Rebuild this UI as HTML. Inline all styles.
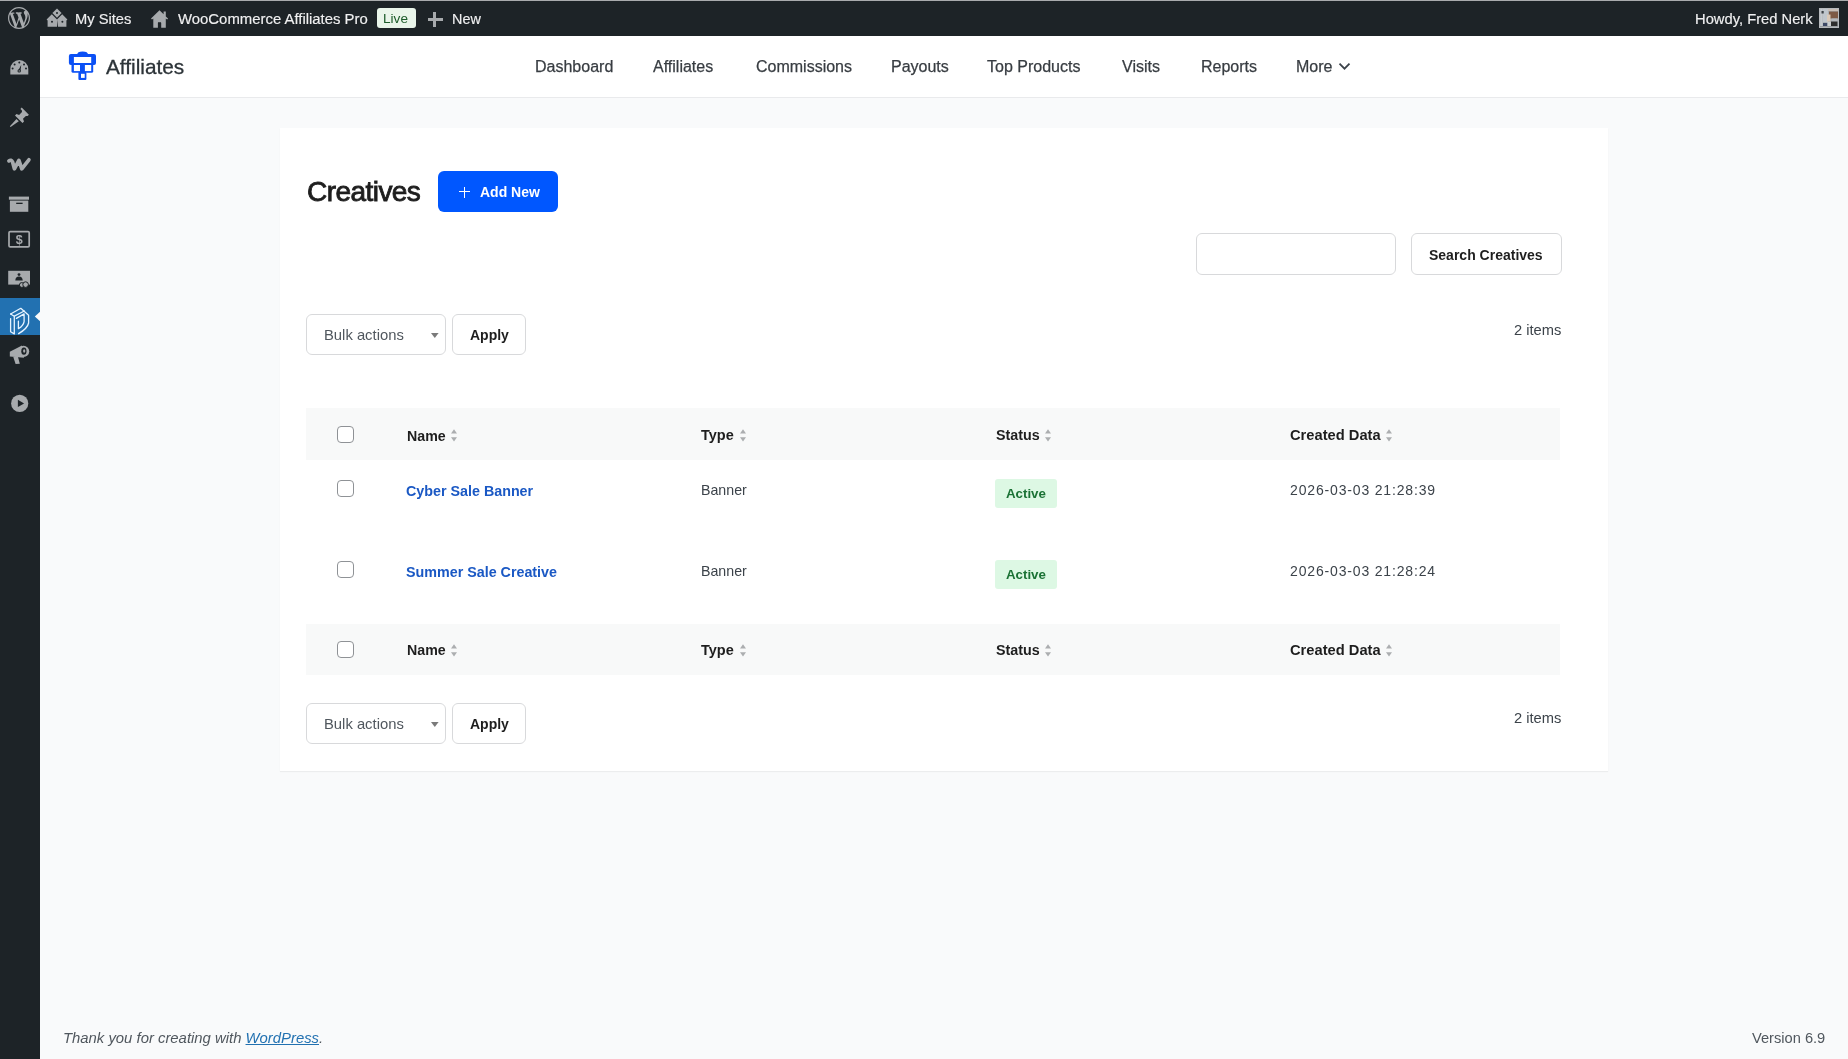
<!DOCTYPE html>
<html><head><meta charset="utf-8">
<style>
*{box-sizing:border-box;margin:0;padding:0}
html,body{width:1848px;height:1059px;overflow:hidden;background:#f9fafb;font-family:"Liberation Sans",sans-serif;position:relative}
.a{position:absolute;white-space:pre;line-height:1;will-change:transform}
.w{color:#f0f0f1;-webkit-text-stroke:0.15px #f0f0f1}
.nav{color:#383d42;-webkit-text-stroke:0.25px #383d42}
.btn{position:absolute;border:1px solid #d8d9db;border-radius:6px;background:#fff}
.thb{position:absolute;left:306px;width:1254px;background:#f8f9f9}
.cb{position:absolute;left:336.8px;width:17.4px;height:17.4px;border:1.1px solid #8f9296;border-radius:4px;background:#fff}
.th{font-weight:bold;color:#1e1e1e}
.link{font-weight:bold;color:#1a58c4}
.cell{color:#3c434a}
.date{color:#3c434a;letter-spacing:.84px}
.badge{position:absolute;left:995px;width:62px;height:29px;background:#ddf8e4;border-radius:3px}
.bt{font-weight:bold;color:#1b7235}
</style></head><body>
<div class="a" style="left:0;top:0;width:1848px;height:36px;background:#1d2327"></div>
<div class="a" style="left:0;top:0;width:1848px;height:1px;background:#a9abad"></div>
<svg class="a" style="left:8px;top:7px" width="22" height="22" viewBox="0 0 20 20"><path fill="#a7aaad" d="M20 10c0-5.51-4.49-10-10-10C4.48 0 0 4.49 0 10c0 5.52 4.48 10 10 10 5.51 0 10-4.48 10-10zM7.78 15.37L4.37 6.22c.55-.02 1.170-.08 1.17-.08.5-.06.44-1.13-.06-1.11 0 0-1.45.11-2.37.11-.18 0-.37 0-.58-.01C4.12 2.83 6.9 1.2 10 1.2c2.31 0 4.41.87 5.99 2.32-.67-.11-1.63.39-1.63 1.56 0 .73.44 1.34.89 2.07.35.61.55 1.36.55 2.46 0 1.49-1.4 5-1.4 5l-3.03-8.37c.54-.02.82-.17.82-.17.5-.05.44-1.25-.06-1.22 0 0-1.44.12-2.38.12-.87 0-2.33-.12-2.33-.12-.5-.03-.56 1.2-.06 1.22l.92.08 1.26 3.41zM17.41 10c.24-.64.74-1.87.43-4.25.7 1.29 1.05 2.71 1.05 4.25 0 3.29-1.73 6.24-4.4 7.78.97-2.59 1.94-5.2 2.92-7.78zM6.1 18.09C3.12 16.64 1.11 13.53 1.11 10c0-1.3.23-2.48.72-3.59 1.42 3.89 2.84 7.79 4.27 11.68zm4.04-6.72l2.57 6.96c-.85.29-1.74.44-2.71.44-.82 0-1.62-.11-2.37-.33.84-2.37 1.68-4.72 2.51-7.07z"/></svg>
<svg class="a" style="left:46px;top:8.4px" width="22" height="19" viewBox="0 0 22 19"><g fill="#a7aaad"><path d="M11 0.5l4.6 4.6-4.6 4.6-4.6-4.6z"/><path d="M0.6 11.4l5.2-5.2 5.2 5.2v7.4H1.6v-6.4z"/><path d="M11 11.4l5.2-5.2 5.2 5.2-1 1v6.4H12z"/></g><g fill="#1d2327"><circle cx="11" cy="5.1" r="1"/><circle cx="6" cy="13.8" r="1"/><circle cx="16.4" cy="13.8" r="1"/></g></svg>
<div class="a w" style="left:75.3px;top:12.2px;font-size:14.7px;">My Sites</div>
<svg class="a" style="left:151px;top:10px" width="17" height="18" viewBox="0 0 17 18"><path fill="#a7aaad" d="M8.5 0.3L0 8.6l1 1 1.3-1.2V17.7h4.6v-5h3.3v5h4.6V8.4l1.3 1.2 1-1-2.3-2.2V1.6h-2.2v2.6z"/><path fill="#1d2327" d="M7 12.3h3v5.4H7z"/></svg>
<div class="a w" style="left:177.9px;top:12.0px;font-size:14.9px;">WooCommerce Affiliates Pro</div>
<div class="a" style="left:377px;top:8px;width:39px;height:20px;background:#e9f5ea;border-radius:3px"></div>
<div class="a " style="left:383.4px;top:12.4px;font-size:13.6px;color:#1d5c2b">Live</div>
<div class="a" style="left:427.5px;top:17.5px;width:14.5px;height:3px;background:#a7aaad"></div><div class="a" style="left:433.3px;top:11.7px;width:3px;height:14.5px;background:#a7aaad"></div>
<div class="a w" style="left:452.0px;top:11.9px;font-size:14.4px;">New</div>
<div class="a w" style="left:1695.0px;top:12.1px;font-size:14.74px;">Howdy, Fred Nerk</div>
<svg class="a" style="left:1819px;top:8px" width="20" height="20" viewBox="0 0 20 20">
<defs><filter id="bl" x="-10%" y="-10%" width="120%" height="120%"><feGaussianBlur stdDeviation="0.55"/></filter></defs>
<rect x="0" y="0" width="20" height="20" fill="#b9bdc1"/>
<g filter="url(#bl)">
<rect x="1" y="1" width="18" height="18" fill="#a9afb4"/>
<rect x="1.2" y="1" width="2.4" height="18" fill="#c5cace"/>
<rect x="4" y="1" width="5" height="13" fill="#bfc6cc"/>
<rect x="2.5" y="3" width="2.2" height="2.5" fill="#3a3f44"/>
<rect x="9" y="1" width="10" height="2" fill="#c8beb6"/>
<rect x="10" y="3.5" width="9" height="7" fill="#7d5a44"/>
<rect x="8" y="6.5" width="3.5" height="7" fill="#d9c9b8"/>
<rect x="12.5" y="10.5" width="6" height="4" fill="#b4b8bb"/>
<rect x="4" y="15" width="4.5" height="6.5" fill="#3c4866"/>
<rect x="8.5" y="14" width="3.5" height="7" fill="#c9cdce"/>
<rect x="12" y="13.5" width="6.5" height="8" fill="#2e2e2f"/>
<rect x="1" y="18" width="18" height="1.3" fill="#9a9fa3"/>
</g>
<rect x="0.5" y="0.5" width="19" height="19" fill="none" stroke="#b7babd" stroke-width="1"/>
</svg>
<div class="a" style="left:0;top:36px;width:40px;height:1023px;background:#1d2327"></div>
<div class="a" style="left:0;top:298px;width:40px;height:37px;background:#2271b1"></div>
<svg class="a" style="left:34px;top:311px" width="6" height="11" viewBox="0 0 6 11"><path d="M6 0.8v9.4L0.8 5.5z" fill="#f9fafb"/></svg>
<svg class="a" style="left:0;top:0" width="40" height="430" viewBox="0 0 40 430">
<g fill="#a7aaad">
<path d="M10.3 69 A9 9 0 0 1 28.3 69 V74.6 H10.3 Z"/>
</g>
<g fill="#1d2327">
<circle cx="19.3" cy="62.6" r="1"/><circle cx="14.6" cy="64.4" r="1"/><circle cx="24" cy="64.4" r="1"/><circle cx="12.6" cy="68.6" r="1"/><circle cx="26" cy="68.6" r="1"/>
<path d="M18.2 70.4 L21.3 64.8 L20.4 71.2 Z"/><circle cx="19.2" cy="70.9" r="1.7"/>
</g>
<circle cx="19.2" cy="70.9" r="0.7" fill="#a7aaad"/>
<g fill="#a7aaad">
<path d="M21.7 107.6 L28.9 114.8 L27.6 116.1 L25.9 115.9 L23 118.8 L24 121.4 L22.5 122.9 L15 115.4 L16.5 113.9 L19.1 114.9 L22 112 L21.8 110.3 L20.4 108.9 Z"/>
<path d="M16.5 119 L18.8 121.3 L10.6 126.9 L9.9 126.2 Z"/>
</g>
<path d="M8.9 160.9 Q11.2 159.2 12.6 162 L14.4 168.8 L18.9 160.4 L21.8 168.8 L28.9 159.8" fill="none" stroke="#a7aaad" stroke-width="3.7" stroke-linecap="round" stroke-linejoin="round"/>
<rect x="8.9" y="196.6" width="20.1" height="3.1" fill="#a7aaad"/>
<rect x="9.9" y="200.6" width="18.4" height="11.2" fill="#a7aaad"/>
<rect x="16.2" y="202.7" width="6.4" height="1.3" fill="#1d2327"/>
<rect x="9" y="231.6" width="20.2" height="15.3" rx="1.2" fill="none" stroke="#a7aaad" stroke-width="1.7"/>
<text x="19.2" y="244.2" font-family="Liberation Sans" font-weight="bold" font-size="12.5" fill="#a7aaad" text-anchor="middle">$</text>
<rect x="8.2" y="270.8" width="21.8" height="13.8" fill="#a7aaad"/>
<circle cx="19" cy="274.6" r="1.4" fill="#1d2327"/>
<path d="M15.3 280.6 Q15.5 276.6 19 276.6 Q22.5 276.6 22.7 280.6 Z" fill="#1d2327"/>
<circle cx="21.8" cy="285" r="2.4" fill="#a7aaad" stroke="#1d2327" stroke-width="1"/>
<circle cx="25.6" cy="284.6" r="2.8" fill="#a7aaad" stroke="#1d2327" stroke-width="1"/>
<g fill="none" stroke="#e6f3ff" stroke-width="1.3" stroke-linejoin="round" stroke-linecap="round">
<path d="M10.6 314 L20.8 308.3 L28.6 315.2 L28.6 323 Q27.5 328.5 18.6 333.6"/>
<path d="M10.6 318.6 V331.8 L14.3 333.9 V316.2 L10.6 314"/>
<path d="M14.3 316.2 L24.3 311"/>
<path d="M16.4 318.4 L24.1 313.9 L24.1 321.6 Q23.4 325.8 18.4 328.6 V321.2"/>
</g>
<g fill="#a7aaad">
<path d="M9.8 351.7 L22 345.4 L24 357.8 L9.8 356.5 Z"/>
<circle cx="23.6" cy="351.4" r="5.6"/>
<path d="M13.2 356.7 L18 357.1 L19.8 363.8 L15.6 364 Z"/>
</g>
<ellipse cx="23.9" cy="351.2" rx="2.6" ry="3.6" fill="#1d2327"/>
<ellipse cx="24.2" cy="351" rx="1.1" ry="1.8" fill="#a7aaad"/>
<circle cx="19.7" cy="403.4" r="8.6" fill="#a7aaad"/>
<path d="M17.9 399.7 L24.1 403.4 L17.9 407.1 Z" fill="#1d2327"/>
</svg>
<div class="a" style="left:40px;top:36px;width:1808px;height:62px;background:#fff;border-bottom:1px solid #e9eaec"></div>
<svg class="a" style="left:64px;top:48px" width="36" height="36" viewBox="0 0 36 36"><g fill="#0b50f5">
<path d="M13.1 6.8 C13.1 4.5 15 3.4 18.6 3.4 C22.2 3.4 24.1 4.5 24.1 6.8z"/>
<rect x="4.9" y="6.1" width="27.1" height="10.9" rx="2"/>
<rect x="7.5" y="16" width="21.7" height="8.8" rx="1.6"/>
<rect x="14.4" y="24" width="8" height="8" rx="1"/>
</g><g fill="#fff">
<rect x="9.9" y="9" width="17.3" height="6"/>
<rect x="9.9" y="17" width="6.1" height="6.1"/>
<rect x="20.9" y="17" width="6.3" height="6.1"/>
<rect x="17" y="25.8" width="3.7" height="4.1"/>
</g></svg>
<div class="a " style="left:106.2px;top:56.9px;font-size:20.8px;color:#2c3338;-webkit-text-stroke:0.3px #2c3338">Affiliates</div>
<div class="a nav" style="left:534.7px;top:59.4px;font-size:16px;">Dashboard</div>
<div class="a nav" style="left:652.5px;top:59.4px;font-size:16px;">Affiliates</div>
<div class="a nav" style="left:755.5px;top:59.4px;font-size:16px;">Commissions</div>
<div class="a nav" style="left:890.9px;top:59.4px;font-size:16px;">Payouts</div>
<div class="a nav" style="left:987.0px;top:59.4px;font-size:16px;">Top Products</div>
<div class="a nav" style="left:1122.2px;top:59.4px;font-size:16px;">Visits</div>
<div class="a nav" style="left:1200.6px;top:59.4px;font-size:16px;">Reports</div>
<div class="a nav" style="left:1296.3px;top:59.4px;font-size:16px;">More</div>
<svg class="a" style="left:1338px;top:62px" width="13" height="9" viewBox="0 0 13 9"><path d="M1.5 1.7l5 5 5-5" fill="none" stroke="#3c434a" stroke-width="1.8"/></svg>
<div class="a" style="left:280px;top:128px;width:1328px;height:643px;background:#fff;box-shadow:0 1px 1px rgba(0,0,0,.05)"></div>
<div class="a " style="left:306.8px;top:178.2px;font-size:28px;color:#1e1e1e;-webkit-text-stroke:0.85px #1e1e1e;letter-spacing:-0.55px">Creatives</div>
<div class="a" style="left:438px;top:171px;width:120px;height:41px;background:#0057ff;border-radius:6px"></div>
<div class="a" style="left:459px;top:191.4px;width:11px;height:1.3px;background:#fff"></div><div class="a" style="left:463.85px;top:186.5px;width:1.3px;height:11px;background:#fff"></div>
<div class="a " style="left:480.2px;top:184.8px;font-size:14px;color:#fff;font-weight:bold">Add New</div>
<div class="btn" style="left:1196px;top:233px;width:200px;height:42px"></div>
<div class="btn" style="left:1411px;top:233px;width:151px;height:42px"></div>
<div class="a " style="left:1429.4px;top:247.9px;font-size:14px;color:#1e1e1e;font-weight:bold">Search Creatives</div>
<div class="btn" style="left:306px;top:314px;width:140px;height:41px"></div>
<div class="a " style="left:324.0px;top:328.0px;font-size:14.8px;color:#50575e">Bulk actions</div>
<svg class="a" style="left:430.7px;top:333px" width="7.6" height="5" viewBox="0 0 7.6 5"><path d="M0 0h7.6L3.8 5z" fill="#7a7a7a"/></svg>
<div class="btn" style="left:452px;top:314px;width:74px;height:41px"></div>
<div class="a " style="left:470.4px;top:328.1px;font-size:14px;color:#1e1e1e;font-weight:bold">Apply</div>
<div class="a " style="left:1513.9px;top:322.9px;font-size:14.7px;color:#3c434a">2 items</div>
<div class="thb" style="top:408px;height:52px"></div>
<div class="cb" style="top:425.5px"></div>
<div class="a th" style="left:406.5px;top:428.5px;font-size:14.2px;">Name</div>
<svg class="a" style="left:450.8px;top:428.8px" width="6" height="13" viewBox="0 0 6 13"><path d="M3 0.2L6 4.4H0z M3 12.5L6 8.3H0z" fill="#acaeb0"/></svg>
<div class="a th" style="left:700.8px;top:428.3px;font-size:14.5px;">Type</div>
<svg class="a" style="left:739.7px;top:428.8px" width="6" height="13" viewBox="0 0 6 13"><path d="M3 0.2L6 4.4H0z M3 12.5L6 8.3H0z" fill="#acaeb0"/></svg>
<div class="a th" style="left:995.6px;top:428.4px;font-size:14.3px;">Status</div>
<svg class="a" style="left:1045.0px;top:428.8px" width="6" height="13" viewBox="0 0 6 13"><path d="M3 0.2L6 4.4H0z M3 12.5L6 8.3H0z" fill="#acaeb0"/></svg>
<div class="a th" style="left:1289.7px;top:428.1px;font-size:14.7px;">Created Data</div>
<svg class="a" style="left:1385.8px;top:428.8px" width="6" height="13" viewBox="0 0 6 13"><path d="M3 0.2L6 4.4H0z M3 12.5L6 8.3H0z" fill="#acaeb0"/></svg>
<div class="cb" style="top:480px"></div>
<div class="a link" style="left:406.2px;top:483.6px;font-size:14.3px;">Cyber Sale Banner</div>
<div class="a cell" style="left:701.0px;top:482.8px;font-size:14.2px;">Banner</div>
<div class="badge" style="top:479px"></div>
<div class="a bt" style="left:1006.2px;top:487.4px;font-size:13.3px;">Active</div>
<div class="a date" style="left:1290.3px;top:482.9px;font-size:14px;">2026-03-03 21:28:39</div>
<div class="cb" style="top:561px"></div>
<div class="a link" style="left:406.2px;top:564.6px;font-size:14.3px;">Summer Sale Creative</div>
<div class="a cell" style="left:701.0px;top:563.8px;font-size:14.2px;">Banner</div>
<div class="badge" style="top:560px"></div>
<div class="a bt" style="left:1006.2px;top:568.4px;font-size:13.3px;">Active</div>
<div class="a date" style="left:1290.3px;top:563.9px;font-size:14px;">2026-03-03 21:28:24</div>
<div class="thb" style="top:624px;height:51px"></div>
<div class="cb" style="top:641.0px"></div>
<div class="a th" style="left:406.5px;top:643.2px;font-size:14.2px;">Name</div>
<svg class="a" style="left:450.8px;top:644.3px" width="6" height="13" viewBox="0 0 6 13"><path d="M3 0.2L6 4.4H0z M3 12.5L6 8.3H0z" fill="#acaeb0"/></svg>
<div class="a th" style="left:700.8px;top:643.0px;font-size:14.5px;">Type</div>
<svg class="a" style="left:739.7px;top:644.3px" width="6" height="13" viewBox="0 0 6 13"><path d="M3 0.2L6 4.4H0z M3 12.5L6 8.3H0z" fill="#acaeb0"/></svg>
<div class="a th" style="left:995.6px;top:643.1px;font-size:14.3px;">Status</div>
<svg class="a" style="left:1045.0px;top:644.3px" width="6" height="13" viewBox="0 0 6 13"><path d="M3 0.2L6 4.4H0z M3 12.5L6 8.3H0z" fill="#acaeb0"/></svg>
<div class="a th" style="left:1289.7px;top:642.8px;font-size:14.7px;">Created Data</div>
<svg class="a" style="left:1385.8px;top:644.3px" width="6" height="13" viewBox="0 0 6 13"><path d="M3 0.2L6 4.4H0z M3 12.5L6 8.3H0z" fill="#acaeb0"/></svg>
<div class="btn" style="left:306px;top:703px;width:140px;height:41px"></div>
<div class="a " style="left:324.0px;top:717.0px;font-size:14.8px;color:#50575e">Bulk actions</div>
<svg class="a" style="left:430.7px;top:722px" width="7.6" height="5" viewBox="0 0 7.6 5"><path d="M0 0h7.6L3.8 5z" fill="#7a7a7a"/></svg>
<div class="btn" style="left:452px;top:703px;width:74px;height:41px"></div>
<div class="a " style="left:470.4px;top:717.1px;font-size:14px;color:#1e1e1e;font-weight:bold">Apply</div>
<div class="a " style="left:1513.9px;top:710.9px;font-size:14.7px;color:#3c434a">2 items</div>
<div class="a " style="left:62.6px;top:1031.2px;font-size:14.87px;color:#50575e;font-style:italic">Thank you for creating with <span style="color:#2271b1;text-decoration:underline">WordPress</span>.</div>
<div class="a " style="left:1751.7px;top:1030.7px;font-size:14.65px;color:#50575e">Version 6.9</div>
</body></html>
